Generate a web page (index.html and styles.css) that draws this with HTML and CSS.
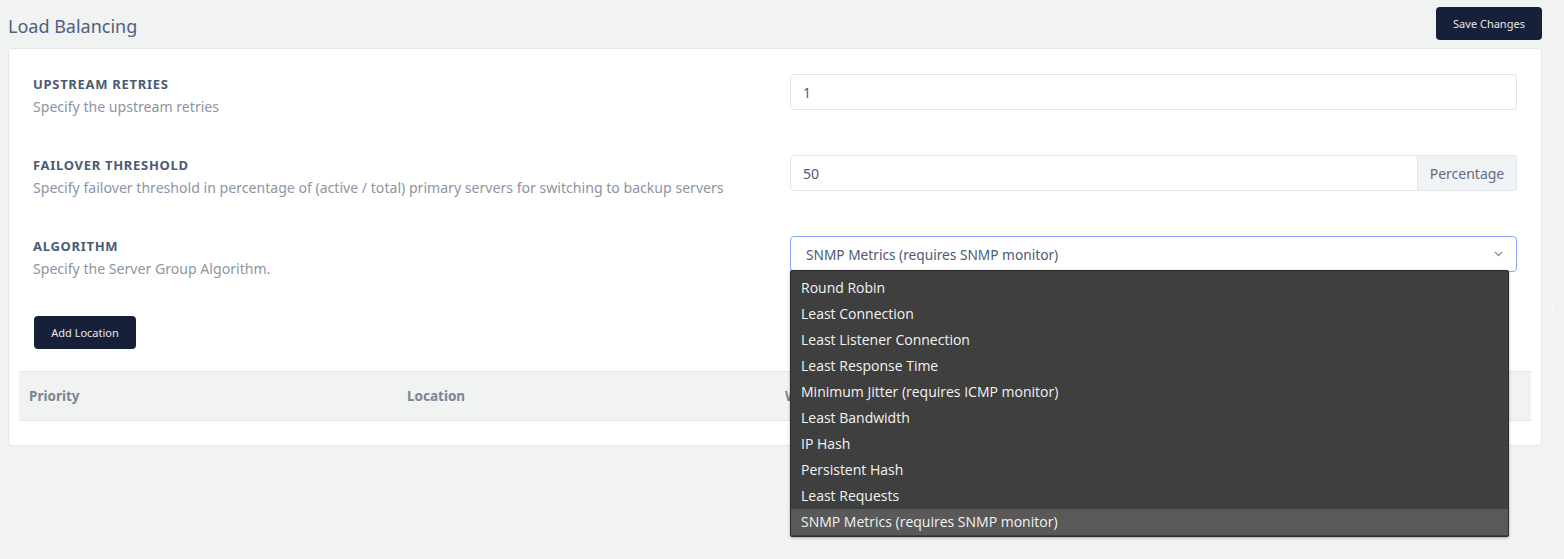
FILE: index.html
```html
<!DOCTYPE html>
<html lang="en">
<head>
<meta charset="utf-8">
<title>Load Balancing</title>
<link rel="stylesheet" href="styles.css">
</head>
<body>
<div class="page">
  <main class="main">
    <header class="header">
      <h1 class="title">Load Balancing</h1>
      <button class="btn btn-save">Save Changes</button>
    </header>
    <section class="card">
      <div class="rows">
        <div class="row">
          <div class="info">
            <div class="label">UPSTREAM RETRIES</div>
            <div class="desc">Specify the upstream retries</div>
          </div>
          <div class="control">
            <div class="input">1</div>
          </div>
        </div>
        <div class="row">
          <div class="info">
            <div class="label">FAILOVER THRESHOLD</div>
            <div class="desc">Specify failover threshold in percentage of (active / total) primary servers for switching to backup servers</div>
          </div>
          <div class="control">
            <div class="input-group">
              <div class="input grouped">50</div>
              <div class="addon">Percentage</div>
            </div>
          </div>
        </div>
        <div class="row">
          <div class="info">
            <div class="label">ALGORITHM</div>
            <div class="desc">Specify the Server Group Algorithm.</div>
          </div>
          <div class="control select-wrap">
            <div class="input select">
              <span>SNMP Metrics (requires SNMP monitor)</span>
              <svg class="caret" width="9" height="6" viewBox="0 0 9 6"><path d="M1 1l3.5 3.5L8 1" fill="none" stroke="#8d95a3" stroke-width="1.3"/></svg>
            </div>
            <ul class="dropdown">
              <li>Round Robin</li>
              <li>Least Connection</li>
              <li>Least Listener Connection</li>
              <li>Least Response Time</li>
              <li>Minimum Jitter (requires ICMP monitor)</li>
              <li>Least Bandwidth</li>
              <li>IP Hash</li>
              <li>Persistent Hash</li>
              <li>Least Requests</li>
              <li class="active">SNMP Metrics (requires SNMP monitor)</li>
            </ul>
          </div>
        </div>
      </div>
      <button class="btn btn-add">Add Location</button>
      <div class="table">
        <div class="th">Priority</div>
        <div class="th">Location</div>
        <div class="th">Weight</div>
        <div class="th">Actions</div>
      </div>
    </section>
  </main>
  <aside class="side">
    <svg width="6" height="11" viewBox="0 0 6 11"><path d="M1 1l4 4.5L1 10" fill="none" stroke="#ffffff" stroke-width="1.2"/></svg>
  </aside>
</div>
</body>
</html>
```

FILE: styles.css
```css
* { box-sizing: border-box; }
html, body { margin: 0; padding: 0; }
body {
  background: #f1f2f2;
  font-family: "Noto Sans", "Open Sans", sans-serif;
  color: #4b5b74;
  height: 559px;
  overflow: hidden;
}
.page {
  display: flex;
  padding: 7px 0 0 8px;
}
.main {
  width: 1534px;
}
.side {
  flex: 1;
  display: flex;
  justify-content: center;
  padding-top: 295px;
  opacity: 0.8;
}
.header {
  display: flex;
  justify-content: space-between;
  align-items: center;
  height: 33px;
  margin-bottom: 8px;
}
.title {
  margin: 0;
  font-weight: 400;
  font-size: 18px;
  color: #4d6180;
  position: relative;
  top: 2px;
}
.btn {
  border: none;
  background: #172039;
  color: #e6e8ee;
  font-family: "Noto Sans", sans-serif;
  font-size: 11px;
  border-radius: 4px;
  cursor: pointer;
}
.btn-save {
  width: 106px;
  height: 33px;
}
.card {
  background: #fff;
  border: 1px solid #e4e7ea;
  border-radius: 4px;
  padding: 25px 10px 24px;
}
.rows {
  display: flex;
  flex-direction: column;
  gap: 38px;
  padding: 0 14px;
}
.row {
  display: grid;
  grid-template-columns: 726px 727px;
  column-gap: 31px;
  min-height: 43px;
}
.label {
  font-size: 13px;
  font-weight: 700;
  letter-spacing: 0.7px;
  line-height: 20px;
  color: #4b5b74;
}
.desc {
  margin-top: 3px;
  font-size: 14.1px;
  line-height: 20px;
  color: #8c95a4;
}
.input {
  height: 36px;
  border: 1px solid #e1e5ea;
  border-radius: 4px;
  padding: 0 12px;
  display: flex;
  align-items: center;
  font-size: 14px;
  color: #4b5b74;
  background: #fff;
}
.input-group {
  display: flex;
}
.input.grouped {
  flex: 1;
  border-radius: 4px 0 0 4px;
}
.addon {
  width: 99px;
  height: 36px;
  border: 1px solid #e1e5ea;
  border-left: none;
  border-radius: 0 4px 4px 0;
  background: #f1f4f7;
  display: flex;
  align-items: center;
  justify-content: center;
  font-size: 14px;
  color: #5f6d82;
}
.select-wrap {
  position: relative;
}
.select {
  border-color: #86a9f5;
  justify-content: space-between;
  padding: 0 13px 0 15px;
  font-size: 13.7px;
}
.caret { display: block; }
.dropdown {
  position: absolute;
  top: 34px;
  left: 0;
  width: 719px;
  margin: 0;
  padding: 4px 0 1px;
  list-style: none;
  background: #3f3f3f;
  border: 1px solid #2b2b2b;
  border-radius: 2px;
  box-shadow: 0 1px 3px rgba(0,0,0,0.3);
  z-index: 10;
}
.dropdown li {
  height: 26px;
  line-height: 26px;
  padding-left: 10px;
  font-family: "Open Sans", "Noto Sans", sans-serif;
  font-size: 14px;
  color: #f3f3f3;
}
.dropdown li.active {
  background: #595959;
}
.btn-add {
  display: block;
  margin: 37px 0 22px 15px;
  width: 102px;
  height: 33px;
}
.table {
  display: grid;
  grid-template-columns: repeat(4, 1fr);
  height: 50px;
  background: #f1f2f2;
  border-top: 1px solid #e2e5e8;
  border-bottom: 1px solid #e2e5e8;
  align-items: center;
}
.th {
  padding-left: 10px;
  font-size: 13.5px;
  font-weight: 700;
  color: #7b8596;
}
```
